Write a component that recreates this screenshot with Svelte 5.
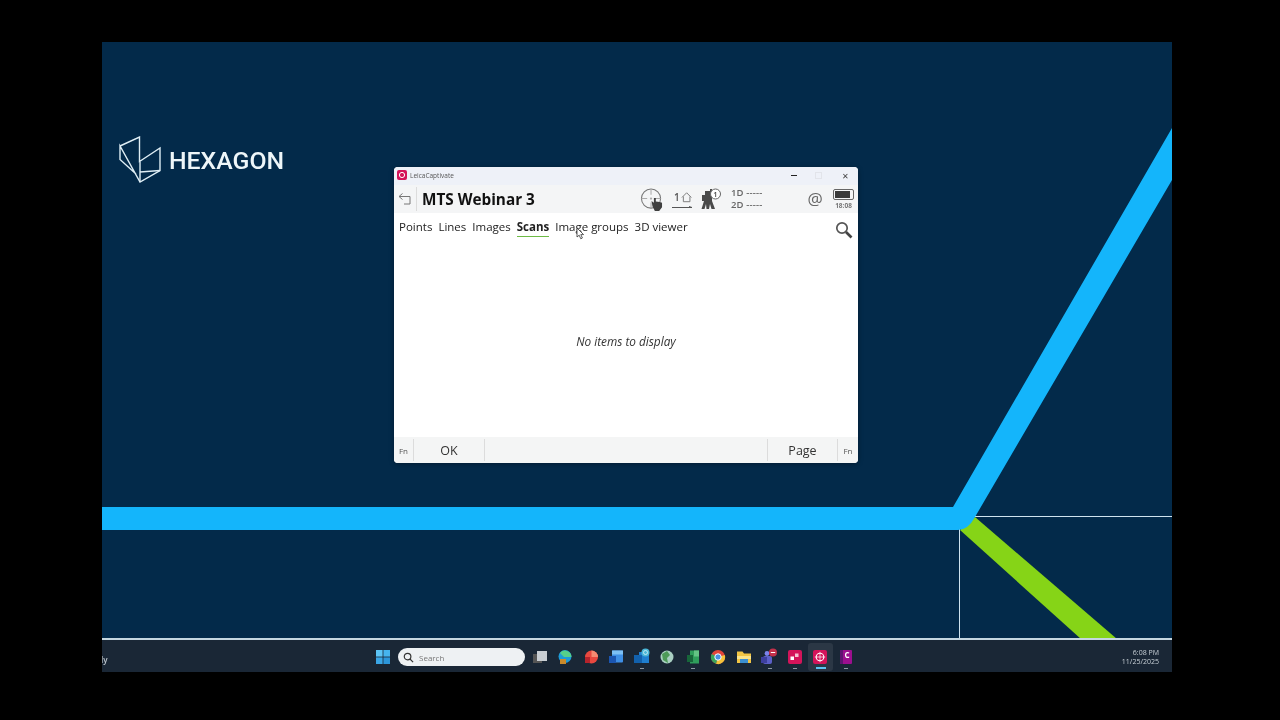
<script lang="ts">
  const tabs = [
    { label: 'Points' },
    { label: 'Lines' },
    { label: 'Images' },
    { label: 'Scans', active: true },
    { label: 'Image groups' },
    { label: '3D viewer' }
  ];
</script>

<div class="page">
  <div class="screen">
    <div class="stage">
      <svg class="art" viewBox="0 0 1070 598" width="1070" height="598" aria-hidden="true">
        <line x1="873" y1="474.5" x2="1070" y2="474.5" stroke="#cfe3ee" stroke-width="1" />
        <line x1="857.5" y1="486" x2="857.5" y2="598" stroke="#cfe3ee" stroke-width="1" />
        <polygon points="858,488 873,475 1015,597 979,597" fill="#86d417" />
        <path d="M0 465 H851 L1070 86 V138 L873 475 Q866 488 856 488 H0 Z" fill="#14b5fb" />
      </svg>

      <div class="logo">
        <svg viewBox="0 0 42 48" width="42" height="48" fill="none" stroke="#dfeef5" stroke-width="1.4" aria-hidden="true">
          <path d="M1 10 L20.5 1 V25.5 L41 12 V34.5 L21 46 L1 10 V23.5 L17 38" />
          <path d="M21 25.5 V46 M21 36 L41 34.5" />
        </svg>
        <span>HEXAGON</span>
      </div>

      <div class="window">
        <div class="titlebar">
          <svg class="app-icon" viewBox="0 0 10 10" width="10" height="10" aria-hidden="true">
            <rect width="10" height="10" rx="2" fill="#d4145a" />
            <circle cx="5" cy="5" r="2.6" fill="none" stroke="#fff" stroke-width="1" />
          </svg>
          <span class="app-name">LeicaCaptivate</span>
          <div class="controls">
            <span class="ctl min"></span>
            <span class="ctl max"></span>
            <span class="ctl close">✕</span>
          </div>
        </div>

        <div class="header">
          <button class="back" aria-label="Back">
            <svg viewBox="0 0 14 14" width="14" height="14" fill="none" stroke="#777" stroke-width="1" aria-hidden="true">
              <path d="M4.5 1.5 L1 4.5 L4.5 7.5 M1 4.5 H12 V12 H6" />
            </svg>
          </button>
          <h1>MTS Webinar 3</h1>
          <div class="status">
            <svg class="st-target" viewBox="0 0 24 24" width="23" height="23" fill="none" stroke="#777" stroke-width="1.1" aria-hidden="true">
              <circle cx="11.5" cy="11" r="10" />
              <path d="M11.5 1 V7 M11.5 15 V21 M1.5 11 H7.5 M15.5 11 H21.5" stroke="#aaa" />
              <circle cx="11.5" cy="11" r="1.2" fill="#aaa" stroke="none" />
              <path d="M13 19 L12 13.5 L14.5 15.5 V10.5 H16.5 V14 L20.5 14.5 L23 15.5 V20 L20 24 H15.5 Z" fill="#3f3f3f" stroke="none" />
            </svg>
            <div class="st-home">
              <div class="home-top">
                <span>1</span>
                <svg viewBox="0 0 12 12" width="12" height="12" fill="none" stroke="#777" stroke-width="1" aria-hidden="true">
                  <path d="M1 6.5 L6 1.5 L11 6.5 M2.5 5.5 V11 H9.5 V5.5" />
                </svg>
              </div>
              <div class="home-rule"></div>
            </div>
            <svg class="st-tps" viewBox="0 0 22 22" width="22" height="22" aria-hidden="true">
              <path d="M2 7 H5 V3 H10 V1 H12 V13 L15 21 H11.5 L10 16 L9 21 H6.5 L6 16 L4.5 21 H1.5 L4 13 H2 Z" fill="#4a4a4a" />
              <circle cx="15.5" cy="6" r="5" fill="#fff" stroke="#666" stroke-width="1" />
              <text x="15.5" y="8.6" text-anchor="middle" class="tps-num">1</text>
            </svg>
            <div class="st-dist">
              <div>1D -----</div>
              <div>2D -----</div>
            </div>
            <span class="st-at">@</span>
            <div class="st-batt">
              <div class="batt"><div class="batt-fill"></div></div>
              <span>18:08</span>
            </div>
          </div>
        </div>

        <div class="tabs">
          {#each tabs as tab}
            <span class="tab" class:active={tab.active}>{tab.label}</span>
          {/each}
          <svg class="search-btn" viewBox="0 0 18 18" width="18" height="18" fill="none" aria-hidden="true">
            <circle cx="7" cy="7" r="5.2" stroke="#555" stroke-width="1.7" />
            <path d="M11 11 L16.5 16.5" stroke="#444" stroke-width="2.6" />
          </svg>
          <svg class="cursor" viewBox="0 0 9 13" width="9" height="13" aria-hidden="true">
            <path d="M1 1 V10 L3.2 8.2 L4.8 11.8 L6.4 11 L4.8 7.6 H7.6 Z" fill="#fff" stroke="#333" stroke-width="0.8" />
          </svg>
        </div>

        <div class="body"><em>No items to display</em></div>

        <div class="softkeys">
          <span class="fn">Fn</span>
          <span class="key ok">OK</span>
          <span class="gap"></span>
          <span class="key page-key">Page</span>
          <span class="fn last">Fn</span>
        </div>
      </div>
    </div>

    <div class="taskbar">
      <span class="weather">ly</span>
      <div class="center">
        <svg class="tb" viewBox="0 0 16 16" width="16" height="16" aria-hidden="true">
          <rect x="1" y="1" width="6.6" height="6.6" fill="#5cc4f5" />
          <rect x="8.4" y="1" width="6.6" height="6.6" fill="#46b4ee" />
          <rect x="1" y="8.4" width="6.6" height="6.6" fill="#3aa6e6" />
          <rect x="8.4" y="8.4" width="6.6" height="6.6" fill="#2c96da" />
        </svg>
        <div class="search">
          <svg viewBox="0 0 12 12" width="11" height="11" fill="none" stroke="#333" stroke-width="1.3" aria-hidden="true">
            <circle cx="5" cy="5" r="3.6" />
            <path d="M7.6 7.6 L11 11" />
          </svg>
          <span>Search</span>
        </div>
        <div class="icons">
          <span class="ti"><svg viewBox="0 0 16 16" width="16" height="16" aria-hidden="true"><rect x="1" y="5" width="9" height="9" fill="#555" /><rect x="5" y="2" width="10" height="10" fill="#c9ced3" /></svg></span>
          <span class="ti"><svg viewBox="0 0 16 16" width="16" height="16" aria-hidden="true"><circle cx="8" cy="7.5" r="6.5" fill="#1d9bd8" /><path d="M3 4 A6.5 6.5 0 0 1 14.5 8 H7 Z" fill="#56cf8a" /><rect x="3" y="10" width="6" height="5" fill="#c98a2b" /></svg></span>
          <span class="ti"><svg viewBox="0 0 16 16" width="16" height="16" aria-hidden="true"><circle cx="8.5" cy="8" r="6.5" fill="#e8483f" /><path d="M8.5 1.5 A6.5 6.5 0 0 1 15 8 H8.5 Z" fill="#f58a72" /><rect x="2" y="8" width="5" height="6" fill="#b5232b" /></svg></span>
          <span class="ti"><svg viewBox="0 0 16 16" width="16" height="16" aria-hidden="true"><rect x="4" y="1.5" width="11" height="12" rx="1" fill="#3e8fe6" /><rect x="4" y="1.5" width="11" height="4" fill="#7cc0f5" /><rect x="1" y="7" width="7" height="7" fill="#1b55b0" /></svg></span>
          <span class="ti dot"><svg viewBox="0 0 18 18" width="18" height="18" aria-hidden="true"><rect x="6" y="4" width="10" height="11" fill="#1f7fd0" /><rect x="1" y="7" width="8" height="8" fill="#1261ad" /><circle cx="12.5" cy="4.5" r="4" fill="#4bb7d8" /><circle cx="12.5" cy="4.5" r="2" fill="none" stroke="#d6f0f7" stroke-width="0.8" /></svg></span>
          <span class="ti"><svg viewBox="0 0 16 16" width="16" height="16" aria-hidden="true"><circle cx="8" cy="8" r="6.5" fill="#a9cfc2" /><path d="M3 5 L8 2 L11 6 L8 9 L9 14 L4 11 Z" fill="#4d9a58" /></svg></span>
          <span class="ti dot"><svg viewBox="0 0 16 16" width="16" height="16" aria-hidden="true"><rect x="5" y="1.5" width="9" height="13" fill="#2f9e5b" /><rect x="9" y="1.5" width="5" height="6" fill="#63c384" /><rect x="2" y="6" width="6" height="7" fill="#17663a" /></svg></span>
          <span class="ti"><svg viewBox="0 0 16 16" width="16" height="16" aria-hidden="true"><circle cx="8" cy="8" r="7" fill="#e2453a" /><path d="M8 8 L14.8 6 A7 7 0 0 1 6 14.8 Z" fill="#f6c33b" /><path d="M8 8 L6 14.8 A7 7 0 0 1 1.6 5 Z" fill="#3aa65a" /><circle cx="8" cy="8" r="3.2" fill="#4a90e2" stroke="#fff" stroke-width="1" /></svg></span>
          <span class="ti"><svg viewBox="0 0 16 16" width="16" height="16" aria-hidden="true"><path d="M1 2.5 H6.5 L8 4.5 H15 V14 H1 Z" fill="#f2c544" /><rect x="1" y="7" width="14" height="3" fill="#fbe48a" /><rect x="4" y="10" width="8" height="4" fill="#3b8fd1" /></svg></span>
          <span class="ti dot"><svg viewBox="0 0 18 18" width="18" height="18" aria-hidden="true"><circle cx="7" cy="5.5" r="2.4" fill="#7b83eb" /><rect x="3" y="8" width="9" height="8" rx="2" fill="#5b5fc7" /><rect x="1" y="9" width="6" height="6" fill="#3d3f9e" /><circle cx="13" cy="4.5" r="4" fill="#c4314b" /><rect x="10.8" y="4" width="4.4" height="1" fill="#fff" /></svg></span>
          <span class="ti dot"><svg viewBox="0 0 16 16" width="16" height="16" aria-hidden="true"><rect x="1" y="1" width="14" height="14" rx="2" fill="#d4145a" /><rect x="3.5" y="7.5" width="3.5" height="3.5" fill="#fff" /><rect x="8" y="4.5" width="3.5" height="3.5" fill="#f5c2d2" /></svg></span>
          <span class="ti running"><svg viewBox="0 0 16 16" width="16" height="16" fill="none" aria-hidden="true"><rect x="1" y="1" width="14" height="14" rx="2" fill="#d4145a" /><circle cx="8" cy="8" r="3.8" stroke="#fff" stroke-width="1.1" /><path d="M8 2.8 V13.2 M2.8 8 H13.2" stroke="#fff" stroke-width="0.7" /></svg></span>
          <span class="ti dot"><svg viewBox="0 0 16 16" width="16" height="16" aria-hidden="true"><rect x="2" y="1" width="12" height="14" rx="1" fill="#9c0f8f" /><rect x="2" y="1" width="3" height="14" fill="#5e1470" /><text x="9" y="9" text-anchor="middle" class="c-mark">C</text></svg></span>
        </div>
      </div>
      <div class="clock">
        <div>6:08 PM</div>
        <div>11/25/2025</div>
      </div>
    </div>
  </div>
</div>

<style>
  :global(body) {
    margin: 0;
    background: #000;
  }

  .page {
    width: 1280px;
    height: 720px;
    background: #000;
    padding: 42px 108px 48px 102px;
    box-sizing: border-box;
    font-family: "Open Sans", "Noto Sans", sans-serif;
    overflow: hidden;
  }

  .screen {
    height: 630px;
    display: flex;
    flex-direction: column;
    background: #032a4a;
    filter: blur(0.35px);
  }

  .stage {
    position: relative;
    height: 598px;
    overflow: hidden;
    border-bottom: 2px solid #c5d7e1;
    box-sizing: border-box;
  }

  .art {
    position: absolute;
    left: 0;
    top: 0;
  }

  .logo {
    position: absolute;
    left: 17px;
    top: 94px;
    display: flex;
    align-items: center;
    gap: 8px;
    color: #eef6f9;
    font-family: "Roboto", "Open Sans", sans-serif;
    font-weight: 500;
    font-size: 24.8px;
  }

  .window {
    position: absolute;
    left: 292px;
    top: 125px;
    width: 464px;
    height: 296px;
    display: flex;
    flex-direction: column;
    background: #fff;
    border-radius: 4px;
    overflow: hidden;
    box-shadow: 0 1px 5px rgba(0, 0, 0, 0.35);
  }

  .titlebar {
    height: 18px;
    flex: none;
    display: flex;
    align-items: center;
    padding: 0 0 2px 3px;
    box-sizing: border-box;
    background: #eef1f8;
  }

  .app-name {
    margin-left: 3px;
    font-size: 6.5px;
    color: #555;
  }

  .controls {
    margin-left: auto;
    display: flex;
    align-items: center;
  }

  .ctl {
    width: 26px;
    text-align: center;
    font-size: 8px;
    color: #333;
  }

  .ctl.min {
    width: 6px;
    height: 1px;
    margin: 0 10px 0 0;
    background: #222;
  }

  .ctl.max {
    width: 7px;
    height: 7px;
    margin: 0 10px 0 8px;
    border: 1px solid #e2e4ea;
    box-sizing: border-box;
  }

  .ctl.close {
    color: #444;
  }

  .header {
    height: 28px;
    flex: none;
    display: flex;
    align-items: center;
    background: #f4f5f6;
  }

  .back {
    width: 23px;
    height: 24px;
    padding: 0;
    display: flex;
    align-items: center;
    justify-content: center;
    background: none;
    border: none;
    border-right: 1px solid #dcdcdc;
  }

  h1 {
    margin: 0 0 0 5px;
    font-size: 15.3px;
    font-weight: 700;
    color: #111;
    font-family: "Open Sans", sans-serif;
  }

  .status {
    margin-left: auto;
    display: flex;
    align-items: center;
    padding-right: 4px;
  }

  .st-home {
    width: 20px;
    margin-left: 9px;
    color: #555;
    font-size: 10px;
    font-weight: 600;
  }

  .home-top {
    display: flex;
    align-items: center;
    gap: 1px;
    padding-left: 2px;
    height: 13px;
  }

  .home-rule {
    position: relative;
    height: 1px;
    margin-top: 3px;
    background: #555;
  }

  .home-rule::after {
    content: "";
    position: absolute;
    right: 0;
    top: -1px;
    border-left: 3px solid #555;
    border-top: 1.5px solid transparent;
    border-bottom: 1.5px solid transparent;
  }

  .st-tps {
    margin-left: 8px;
  }

  .tps-num {
    font-size: 7.5px;
    fill: #444;
    font-weight: 600;
  }

  .st-dist {
    width: 76px;
    margin-left: 9px;
    font-size: 9.5px;
    font-weight: 600;
    line-height: 12px;
    letter-spacing: 0.15px;
    color: #666;
  }

  .st-at {
    width: 16px;
    font-size: 17px;
    line-height: 20px;
    color: #666;
    text-align: center;
  }

  .st-batt {
    width: 21px;
    margin-left: 10px;
    display: flex;
    flex-direction: column;
    align-items: center;
    font-size: 6.5px;
    line-height: 8px;
    font-weight: 700;
    color: #777;
  }

  .batt {
    width: 21px;
    height: 11px;
    border: 1px solid #666;
    border-radius: 2px;
    padding: 1px;
    box-sizing: border-box;
    margin-bottom: 2px;
  }

  .batt-fill {
    width: 90%;
    height: 100%;
    background: #3a3a3a;
  }

  .tabs {
    position: relative;
    height: 32px;
    flex: none;
    display: flex;
    align-items: flex-start;
    gap: 6px;
    padding: 5px 0 0 5px;
    box-sizing: border-box;
    font-size: 11.5px;
    color: #222;
  }

  .tab {
    line-height: 18px;
    border-bottom: 1px solid transparent;
  }

  .tab.active {
    font-weight: 700;
    color: #222;
    border-bottom-color: #6dbb45;
  }

  .search-btn {
    position: absolute;
    right: 5px;
    top: 8px;
  }

  .cursor {
    position: absolute;
    left: 182px;
    top: 14px;
  }

  .body {
    flex: 1;
    display: flex;
    align-items: center;
    justify-content: center;
    font-size: 11.8px;
    color: #333;
  }

  .softkeys {
    height: 26px;
    flex: none;
    display: flex;
    align-items: center;
    background: #f4f5f5;
    color: #333;
    font-size: 12.5px;
  }

  .softkeys > span {
    height: 22px;
    line-height: 24px;
    text-align: center;
    box-sizing: border-box;
  }

  .fn {
    width: 20px;
    font-size: 8px;
    color: #555;
    border-right: 1px solid #dcdcdc;
  }

  .fn.last {
    border-right: none;
  }

  .ok {
    width: 71px;
    border-right: 1px solid #dcdcdc;
  }

  .gap {
    flex: 1;
  }

  .page-key {
    width: 71px;
    border-left: 1px solid #dcdcdc;
    border-right: 1px solid #dcdcdc;
  }

  .taskbar {
    position: relative;
    height: 32px;
    flex: none;
    display: flex;
    align-items: center;
    padding-top: 2px;
    box-sizing: border-box;
    background: #1a2736;
    color: #cfd6dc;
    overflow: hidden;
  }

  .weather {
    position: absolute;
    left: -1px;
    top: 14px;
    font-size: 8px;
    font-weight: 600;
    color: #bfc7ce;
  }

  .center {
    display: flex;
    align-items: center;
    margin-left: 273px;
  }

  .search {
    width: 127px;
    height: 18px;
    margin-left: 7px;
    display: flex;
    align-items: center;
    gap: 5px;
    padding-left: 5px;
    box-sizing: border-box;
    border-radius: 9px;
    background: #eef1f3;
    font-size: 8px;
    color: #777;
  }

  .icons {
    display: flex;
    align-items: center;
    margin-left: 2px;
  }

  .ti {
    position: relative;
    width: 25.5px;
    height: 28px;
    display: flex;
    align-items: center;
    justify-content: center;
  }

  .ti.dot::after {
    content: "";
    position: absolute;
    left: 11px;
    bottom: 2px;
    width: 4px;
    height: 1.5px;
    background: #8e99a3;
  }

  .ti.running {
    background: #2b3745;
    border-radius: 3px;
  }

  .ti.running::after {
    content: "";
    position: absolute;
    left: 8px;
    bottom: 2px;
    width: 10px;
    height: 2px;
    background: #5cc4f5;
  }

  .c-mark {
    font-size: 8px;
    font-weight: 700;
    fill: #fff;
  }

  .clock {
    margin-left: auto;
    padding-right: 13px;
    text-align: right;
    font-size: 7px;
    line-height: 9.5px;
    color: #c8d0d6;
  }
</style>
